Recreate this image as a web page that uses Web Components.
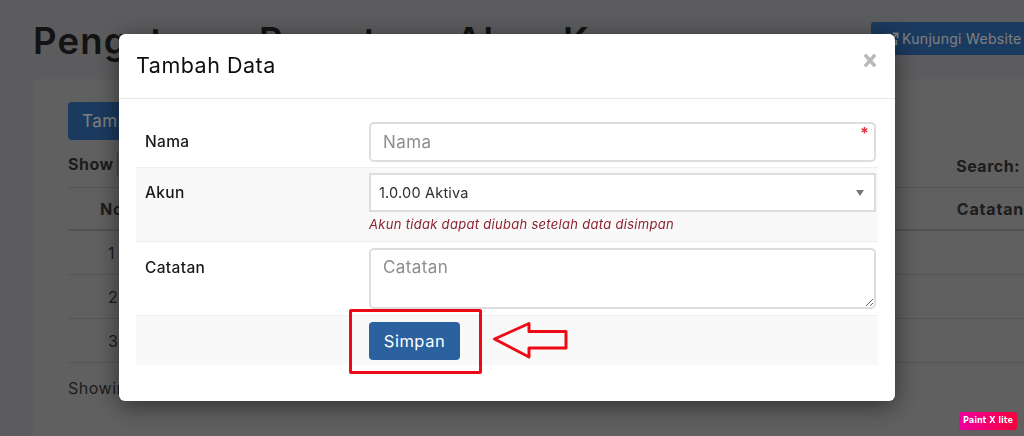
<!DOCTYPE html>
<html lang="id">
<head>
<meta charset="utf-8">
<title>Pengaturan Pemetaan Akun Kas</title>
<style>
  html, body { margin: 0; height: 100%; overflow: hidden; background: #b8b9bc; }
  body { font-family: Inter, "Liberation Sans", sans-serif; color: #212529; }
</style>
</head>
<body>
<admin-page>
  <data-table></data-table>
</admin-page>
<modal-dialog heading="Tambah Data">
  <form-row label="Nama"><text-field placeholder="Nama" required></text-field></form-row>
  <form-row label="Akun" alt>
    <select-field value="1.0.00 Aktiva" help="Akun tidak dapat diubah setelah data disimpan"></select-field>
  </form-row>
  <form-row label="Catatan"><text-field placeholder="Catatan" multiline></text-field></form-row>
  <form-row alt compact><save-button>Simpan</save-button></form-row>
</modal-dialog>
<paint-badge>Paint X lite</paint-badge>

<script>
// ---- latar belakang: halaman admin di balik modal ----
class AdminPage extends HTMLElement {
  constructor() {
    super();
    this.attachShadow({ mode: 'open' }).innerHTML = `
      <style>
        :host { display: block; width: 1024px; height: 436px; overflow: hidden; padding: 14px 0 0 33px; box-sizing: border-box; }
        .head { display: flex; justify-content: space-between; align-items: flex-start; height: 65px; }
        h1 { margin: 7px 0 0; font-size: 36.5px; font-weight: 600; line-height: 40px; color: #262626; letter-spacing: 1.2px; white-space: nowrap; }
        .visit { flex: none; margin-top: 8px; height: 33px; width: 153px; background: #3674be; color: #fff; border-radius: 3px 0 0 3px;
                 display: flex; align-items: center; gap: 3px; padding-left: 14px; box-sizing: border-box; font-size: 14px; letter-spacing: .3px; white-space: nowrap; overflow: hidden; }
        .visit svg { flex: none; width: 14px; height: 14px; }
        .card { background: #c0c0c0; border-radius: 5px 0 0 0; padding: 23px 0 0 35px; height: 357px; box-sizing: border-box; }
      </style>
      <div class="head">
        <h1>Pengaturan Pemetaan Akun Kas</h1>
        <div class="visit">
          <svg viewBox="0 0 16 16" fill="none" stroke="#fff" stroke-width="2"><path d="M7 3H2v11h11V9"/><path d="M6 10l8-8M9 1.500h5.500V7"/></svg>
          <span>Kunjungi Website</span>
        </div>
      </div>
      <div class="card"><slot></slot></div>`;
  }
}

class DataTable extends HTMLElement {
  constructor() {
    super();
    this.attachShadow({ mode: 'open' }).innerHTML = `
      <style>
        :host { display: block; width: 956px; font-size: 16px; color: #3a3a3a; }
        .add { width: 130px; height: 38px; background: #3674be; color: #fff; border-radius: 4px; display: flex; align-items: center; padding-left: 14px; box-sizing: border-box; font-size: 17px; letter-spacing: .5px; white-space: nowrap; }
        .tools { display: flex; justify-content: space-between; height: 47px; align-items: center; font-weight: 700; letter-spacing: .5px; }
        .tools > span { display: flex; align-items: center; gap: 3px; }
        .tools i { display: block; width: 10px; height: 24px; border: 1px solid #888; box-sizing: border-box; border-radius: 2px; }
        .search { padding: 4px 4px 0 0; }
        .row { display: flex; justify-content: space-between; align-items: center; height: 44px; border-bottom: 1px solid #aaa; box-sizing: border-box; padding: 1px 0 0 32px; }
        .row.th { font-weight: 700; letter-spacing: .8px; border-top: 1px solid #aaa; border-bottom: 2px solid #a4a4a4; }
        .row span:first-child { width: 20px; text-align: left; }
        .row:not(.th) span:first-child { padding-left: 8px; }
        .foot { margin-top: 15px; letter-spacing: .5px; }
      </style>
      <div class="add">Tambah Data</div>
      <div class="tools"><span>Show <i></i></span><span class="search">Search:</span></div>
      <div class="row th"><span>No</span><span>Catatan</span></div>
      <div class="row"><span>1</span></div>
      <div class="row"><span>2</span></div>
      <div class="row"><span>3</span></div>
      <div class="foot">Showing 1 to 3 of 3 entries</div>`;
  }
}

// ---- modal ----
class ModalDialog extends HTMLElement {
  constructor() {
    super();
    const heading = this.getAttribute('heading') || '';
    this.attachShadow({ mode: 'open' }).innerHTML = `
      <style>
        :host { position: fixed; inset: 0; display: flex; justify-content: flex-start; align-items: flex-start; background: rgba(0,0,0,.5); }
        .dialog { width: 776px; height: 367px; margin: 34px 0 0 119px; background: #fff; border-radius: 6px; box-shadow: 0 5px 24px rgba(0,0,0,.5); color: #16181a; }
        header { height: 65px; border-bottom: 1px solid #e6e8ea; box-sizing: border-box; display: flex; justify-content: space-between; padding: 0 19px 0 17px; }
        h2 { margin: 15px 0 0; font-size: 21.5px; line-height: 32px; font-weight: 400; letter-spacing: .5px; color: #0c0e10; }
        .close { margin-top: 20px; width: 12px; height: 13px; }
        .close svg { display: block; width: 12px; height: 13px; }
        .body { padding: 11px 17px 0; }
      </style>
      <div class="dialog" role="dialog">
        <header>
          <h2>${heading}</h2>
          <div class="close"><svg viewBox="0 0 12 13"><path d="M2 2L10 11M10 2L2 11" fill="none" stroke="#b8b9ba" stroke-width="3.400" stroke-linecap="square"/></svg></div>
        </header>
        <div class="body"><slot></slot></div>
      </div>`;
  }
}

class FormRow extends HTMLElement {
  constructor() {
    super();
    const label = this.getAttribute('label') || '';
    this.attachShadow({ mode: 'open' }).innerHTML = `
      <style>
        :host { display: grid; grid-template-columns: 233px 507px; width: 742px; box-sizing: border-box; padding: 12px 0 5px; border-bottom: 1px solid #eeeff2; font-size: 15.5px; }
        :host([label="Catatan"]) { padding: 6px 0 6px; }
        :host([alt]) { background: #f9f9f9; padding-top: 5px; }
        :host([compact]) { padding: 6px 0 5px; border-bottom: 0; height: 49px; position: relative; }
        label { padding: 11px 0 0 9px; line-height: 18px; font-weight: 500; letter-spacing: .35px; color: #17191b; }
      </style>
      <label>${label}</label>
      <div><slot></slot></div>`;
  }
}

class TextField extends HTMLElement {
  constructor() {
    super();
    const ph = this.getAttribute('placeholder') || '';
    const multi = this.hasAttribute('multiline');
    const req = this.hasAttribute('required');
    this.attachShadow({ mode: 'open' }).innerHTML = `
      <style>
        :host { display: block; position: relative; }
        input, textarea { display: block; width: 100%; box-sizing: border-box; border: 2px solid #dcdde0; border-radius: 5px; outline: 0; background: #fff;
          font: 400 17px/24px Inter, "Liberation Sans", sans-serif; letter-spacing: .4px; padding: 6px 12px; margin: 0; color: #333; }
        input { height: 40px; }
        textarea { height: 61px; padding-top: 5px; resize: both; }
        ::placeholder { color: #8b8d8f; opacity: 1; }
        .req { position: absolute; top: 3px; right: 7px; color: #e0313f; font-size: 16px; line-height: 16px; font-weight: 700; }
      </style>
      ${multi ? `<textarea placeholder="${ph}"></textarea>` : `<input placeholder="${ph}">`}
      ${req ? '<span class="req">*</span>' : ''}`;
  }
}

class SelectField extends HTMLElement {
  constructor() {
    super();
    const value = this.getAttribute('value') || '';
    const help = this.getAttribute('help') || '';
    this.attachShadow({ mode: 'open' }).innerHTML = `
      <style>
        :host { display: block; }
        .wrap { position: relative; }
        select { display: block; width: 100%; height: 39px; box-sizing: border-box; appearance: none; border: 2px solid #dcdde0; border-radius: 0; background: #fff; outline: 0;
          font: 400 14.5px Inter, "Liberation Sans", sans-serif; letter-spacing: .2px; padding: 0 8px; color: #2a2c2e; margin: 0; }
        .caret { position: absolute; top: 17px; right: 12px; width: 0; height: 0; border: 4.500px solid transparent; border-top: 6px solid #777; border-bottom: 0; }
        p { margin: 2px 0; font-size: 13px; line-height: 20px; font-style: italic; color: #8c2332; letter-spacing: .3px; white-space: nowrap; }
      </style>
      <div class="wrap"><select><option>${value}</option></select><span class="caret"></span></div>
      <p>${help}</p>`;
  }
}

// tombol + anotasi merah dari screenshot
class SaveButton extends HTMLElement {
  constructor() {
    super();
    this.attachShadow({ mode: 'open' }).innerHTML = `
      <style>
        :host { display: block; position: relative; }
        button { display: block; width: 91px; height: 38px; border: 0; border-radius: 4px; background: #2b619f; color: #fff; padding: 0;
          font: 400 16.5px Inter, "Liberation Sans", sans-serif; letter-spacing: .5px; }
        .box { position: absolute; left: -20px; top: -13px; width: 133px; height: 65px; box-sizing: border-box; border: 3px solid #ee0a14; border-radius: 2px; pointer-events: none; }
        .arrow { position: absolute; left: 124px; top: 0; width: 74px; height: 36px; overflow: visible; }
      </style>
      <button type="button"><slot></slot></button>
      <span class="box"></span>
      <svg class="arrow" viewBox="0 0 74 36"><path d="M1.500 17L36 1.500V9.500H73V26H36V35Z" fill="none" stroke="#ee0a14" stroke-width="3" stroke-linejoin="round"/></svg>`;
  }
}

class PaintBadge extends HTMLElement {
  constructor() {
    super();
    this.attachShadow({ mode: 'open' }).innerHTML = `
      <style>
        :host { position: fixed; left: 959px; top: 412px; width: 58px; height: 18px; border-radius: 3px; background: linear-gradient(90deg, #f000a0, #f5003a);
          color: #fff; font: 700 8px/18px "DejaVu Sans", sans-serif; text-align: center; white-space: nowrap; overflow: hidden; }
      </style>
      <slot></slot>`;
  }
}

customElements.define('admin-page', AdminPage);
customElements.define('data-table', DataTable);
customElements.define('modal-dialog', ModalDialog);
customElements.define('form-row', FormRow);
customElements.define('text-field', TextField);
customElements.define('select-field', SelectField);
customElements.define('save-button', SaveButton);
customElements.define('paint-badge', PaintBadge);
</script>
</body>
</html>
